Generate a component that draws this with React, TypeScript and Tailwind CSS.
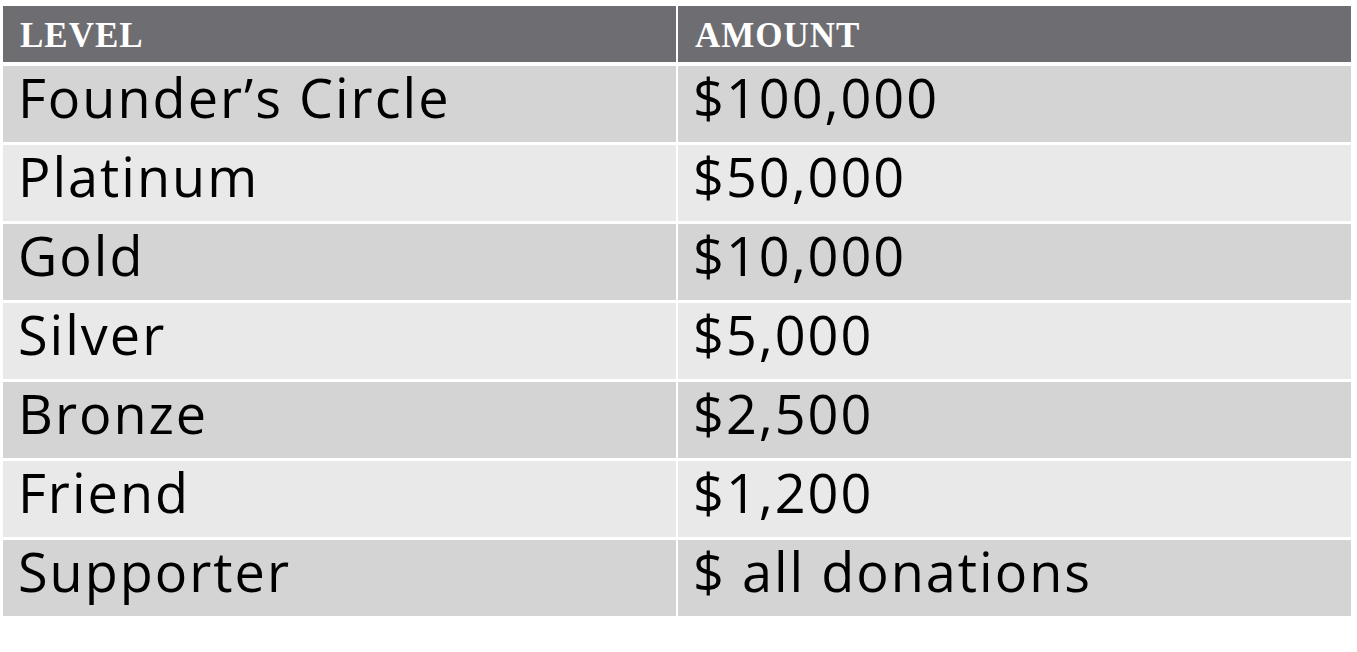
import React from "react";

const rows: [string, string][] = [
  ["Founder’s Circle", "$100,000"],
  ["Platinum", "$50,000"],
  ["Gold", "$10,000"],
  ["Silver", "$5,000"],
  ["Bronze", "$2,500"],
  ["Friend", "$1,200"],
  ["Supporter", "$ all donations"],
];

export default function App() {
  return (
    <div className="w-[1357px] h-[652px] bg-white pt-[6px] pl-[3px]">
      <div className="w-[1348px] grid grid-cols-2 gap-x-[2px]">
        <div className="h-[56px] bg-[#6e6d72] pl-[17px] pt-[10px] text-white font-bold text-[35px] leading-[40px] tracking-[1px] [font-family:'Liberation_Serif',serif]">
          LEVEL
        </div>
        <div className="h-[56px] bg-[#6e6d72] pl-[17px] pt-[10px] text-white font-bold text-[35px] leading-[40px] tracking-[1px] [font-family:'Liberation_Serif',serif]">
          AMOUNT
        </div>
      </div>
      <div className="w-[1348px] mt-[4px] grid grid-cols-2 gap-x-[2px] gap-y-[3px]">
        {rows.map(([a, b], i) => {
          const bg = i % 2 === 0 ? "bg-[#d4d4d4]" : "bg-[#e9e9e9]";
          return (
            <React.Fragment key={a}>
              <div
                className={`${bg} h-[76px] pl-[15px] pt-[6px] text-black text-[54px] leading-[50px] tracking-[2px] [font-family:'Open_Sans',sans-serif]`}
              >
                {a}
              </div>
              <div
                className={`${bg} h-[76px] pl-[15px] pt-[6px] text-black text-[54px] leading-[50px] tracking-[2px] [font-family:'Open_Sans',sans-serif]`}
              >
                {b}
              </div>
            </React.Fragment>
          );
        })}
      </div>
    </div>
  );
}
